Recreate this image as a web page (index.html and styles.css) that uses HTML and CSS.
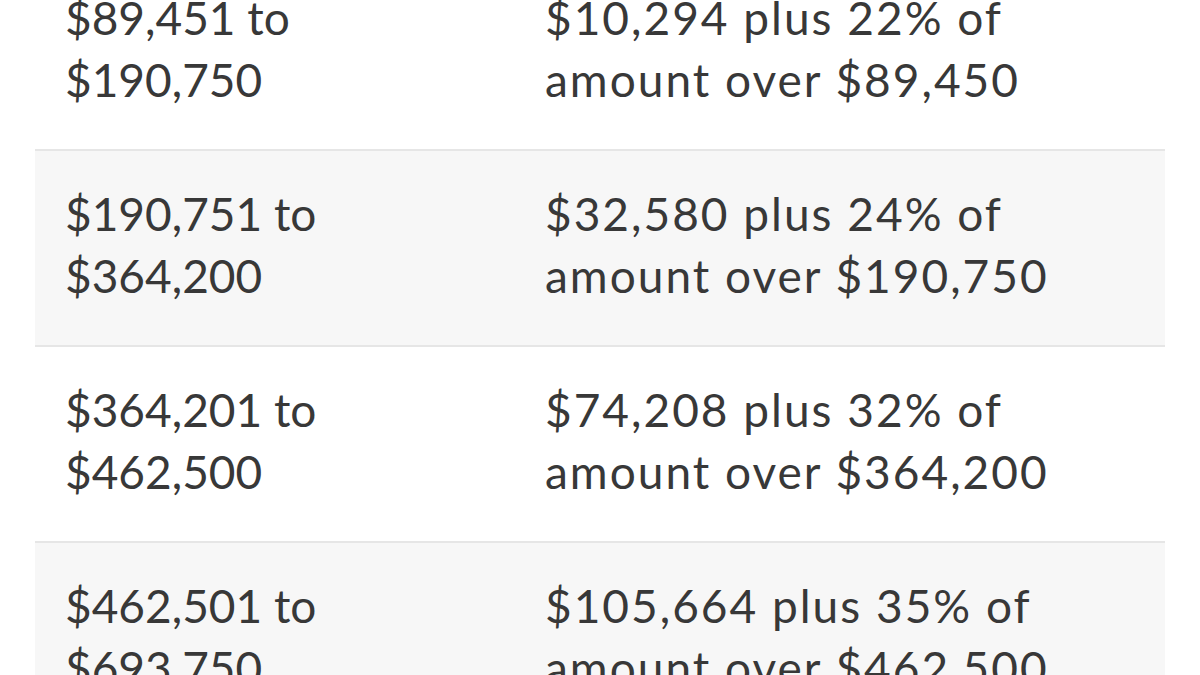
FILE: index.html
```html
<!DOCTYPE html>
<html>
<head>
<meta charset="utf-8">
<link rel="stylesheet" href="styles.css">
</head>
<body>
<div class="table">
  <div class="row">
    <div class="cell">$89,451 to $190,750</div>
    <div class="cell wide">$10,294 plus 22% of amount over $89,450</div>
  </div>
  <div class="row alt">
    <div class="cell">$190,751 to $364,200</div>
    <div class="cell wide">$32,580 plus 24% of amount over $190,750</div>
  </div>
  <div class="row">
    <div class="cell">$364,201 to $462,500</div>
    <div class="cell wide">$74,208 plus 32% of amount over $364,200</div>
  </div>
  <div class="row alt">
    <div class="cell">$462,501 to $693,750</div>
    <div class="cell wide">$105,664 plus 35% of amount over $462,500</div>
  </div>
</div>
</body>
</html>
```
FILE: styles.css
```css
html, body {
  margin: 0;
  padding: 0;
  background: #ffffff;
  overflow: hidden;
}
.table {
  margin: -47px 35px 0 35px;
  font-family: Lato, "Liberation Sans", sans-serif;
  font-weight: 400;
  font-size: 46px;
  line-height: 62px;
  color: #383838;
}
.row {
  display: grid;
  grid-template-columns: 480px 1fr;
  border-top: 2px solid #e6e6e6;
  background: #ffffff;
}
.row.alt {
  background: #f7f7f7;
}
.cell {
  padding: 32px 30px 38px 30px;
  width: 300px;
}
.cell.wide {
  width: 580px;
  letter-spacing: 2px;
}
```
